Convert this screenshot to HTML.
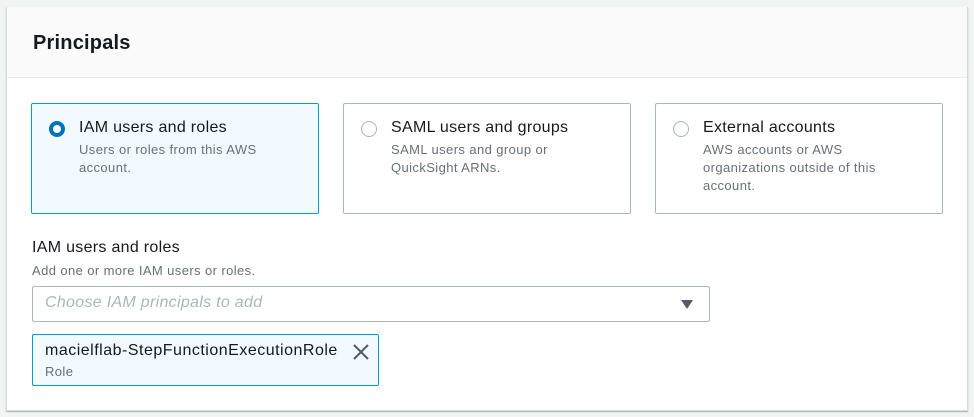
<!DOCTYPE html>
<html><head><style>
body{margin:0;width:974px;height:417px;background:#f2f3f3;font-family:"Liberation Sans",Arial,sans-serif;position:relative;overflow:hidden}
.panel{position:absolute;left:6px;top:7px;width:960px;height:403px;background:#fff;border:1px solid #d5dbdb;border-top:none;box-shadow:0 1px 1px rgba(0,28,36,.3)}
.hdr{height:70px;background:#fafafa;border-bottom:1px solid #eaeded}
.hdr h2{margin:0;position:absolute;left:26px;top:25px;font-size:20px;font-weight:bold;color:#16191f;letter-spacing:0.2px}
.card{position:absolute;top:96px;width:286px;height:109px;border:1px solid #aab7b8;border-radius:2px;background:#fff}
.card.sel{border-color:#00a1c9;background:#f1faff}
.radio{position:absolute;left:17px;top:17px;width:14px;height:14px;border:1px solid #aab7b8;border-radius:50%;background:#fff}
.sel .radio{border:4px solid #0073bb;width:8px;height:8px}
.t{position:absolute;left:47px;top:15px;font-size:16px;color:#16191f;letter-spacing:0.3px}
.d{position:absolute;left:47px;top:37px;font-size:13px;line-height:18px;color:#687078;width:235px;letter-spacing:0.4px}
.abs{position:absolute}
</style></head><body>
<div class="panel">
<div class="hdr"><h2>Principals</h2></div>
<div class="card sel" style="left:24px"><div class="radio"></div><div class="t">IAM users and roles</div><div class="d">Users or roles from this AWS<br>account.</div></div>
<div class="card" style="left:336px"><div class="radio"></div><div class="t">SAML users and groups</div><div class="d">SAML users and group or<br>QuickSight ARNs.</div></div>
<div class="card" style="left:648px"><div class="radio"></div><div class="t">External accounts</div><div class="d">AWS accounts or AWS<br>organizations outside of this<br>account.</div></div>
<div class="abs" style="left:25px;top:232px;font-size:16px;color:#16191f;letter-spacing:0.3px">IAM users and roles</div>
<div class="abs" style="left:25px;top:256px;font-size:13px;color:#687078;letter-spacing:0.4px">Add one or more IAM users or roles.</div>
<div class="abs" style="left:25px;top:279px;width:676px;height:34px;border:1px solid #aab7b8;border-radius:2px">
<div class="abs" style="left:12px;top:7px;font-size:16px;font-style:italic;color:#aab7b8;letter-spacing:0.3px">Choose IAM principals to add</div>
<div class="abs" style="left:648px;top:13px;width:0;height:0;border-left:6px solid transparent;border-right:6px solid transparent;border-top:9px solid #545b64"></div>
</div>
<div class="abs" style="left:25px;top:327px;width:345px;height:50px;border:1px solid #00a1c9;border-radius:2px;background:#f1faff">
<div class="abs" style="left:12px;top:7px;font-size:16px;color:#16191f;letter-spacing:0.5px">macielflab-StepFunctionExecutionRole</div>
<div class="abs" style="left:12px;top:29px;font-size:13px;color:#687078;letter-spacing:0.4px">Role</div>
<svg class="abs" style="left:319px;top:8px" width="18" height="18" viewBox="0 0 18 18"><path d="M2 2L16 16M16 2L2 16" stroke="#545b64" stroke-width="2"/></svg>
</div>
</div>
</body></html>
